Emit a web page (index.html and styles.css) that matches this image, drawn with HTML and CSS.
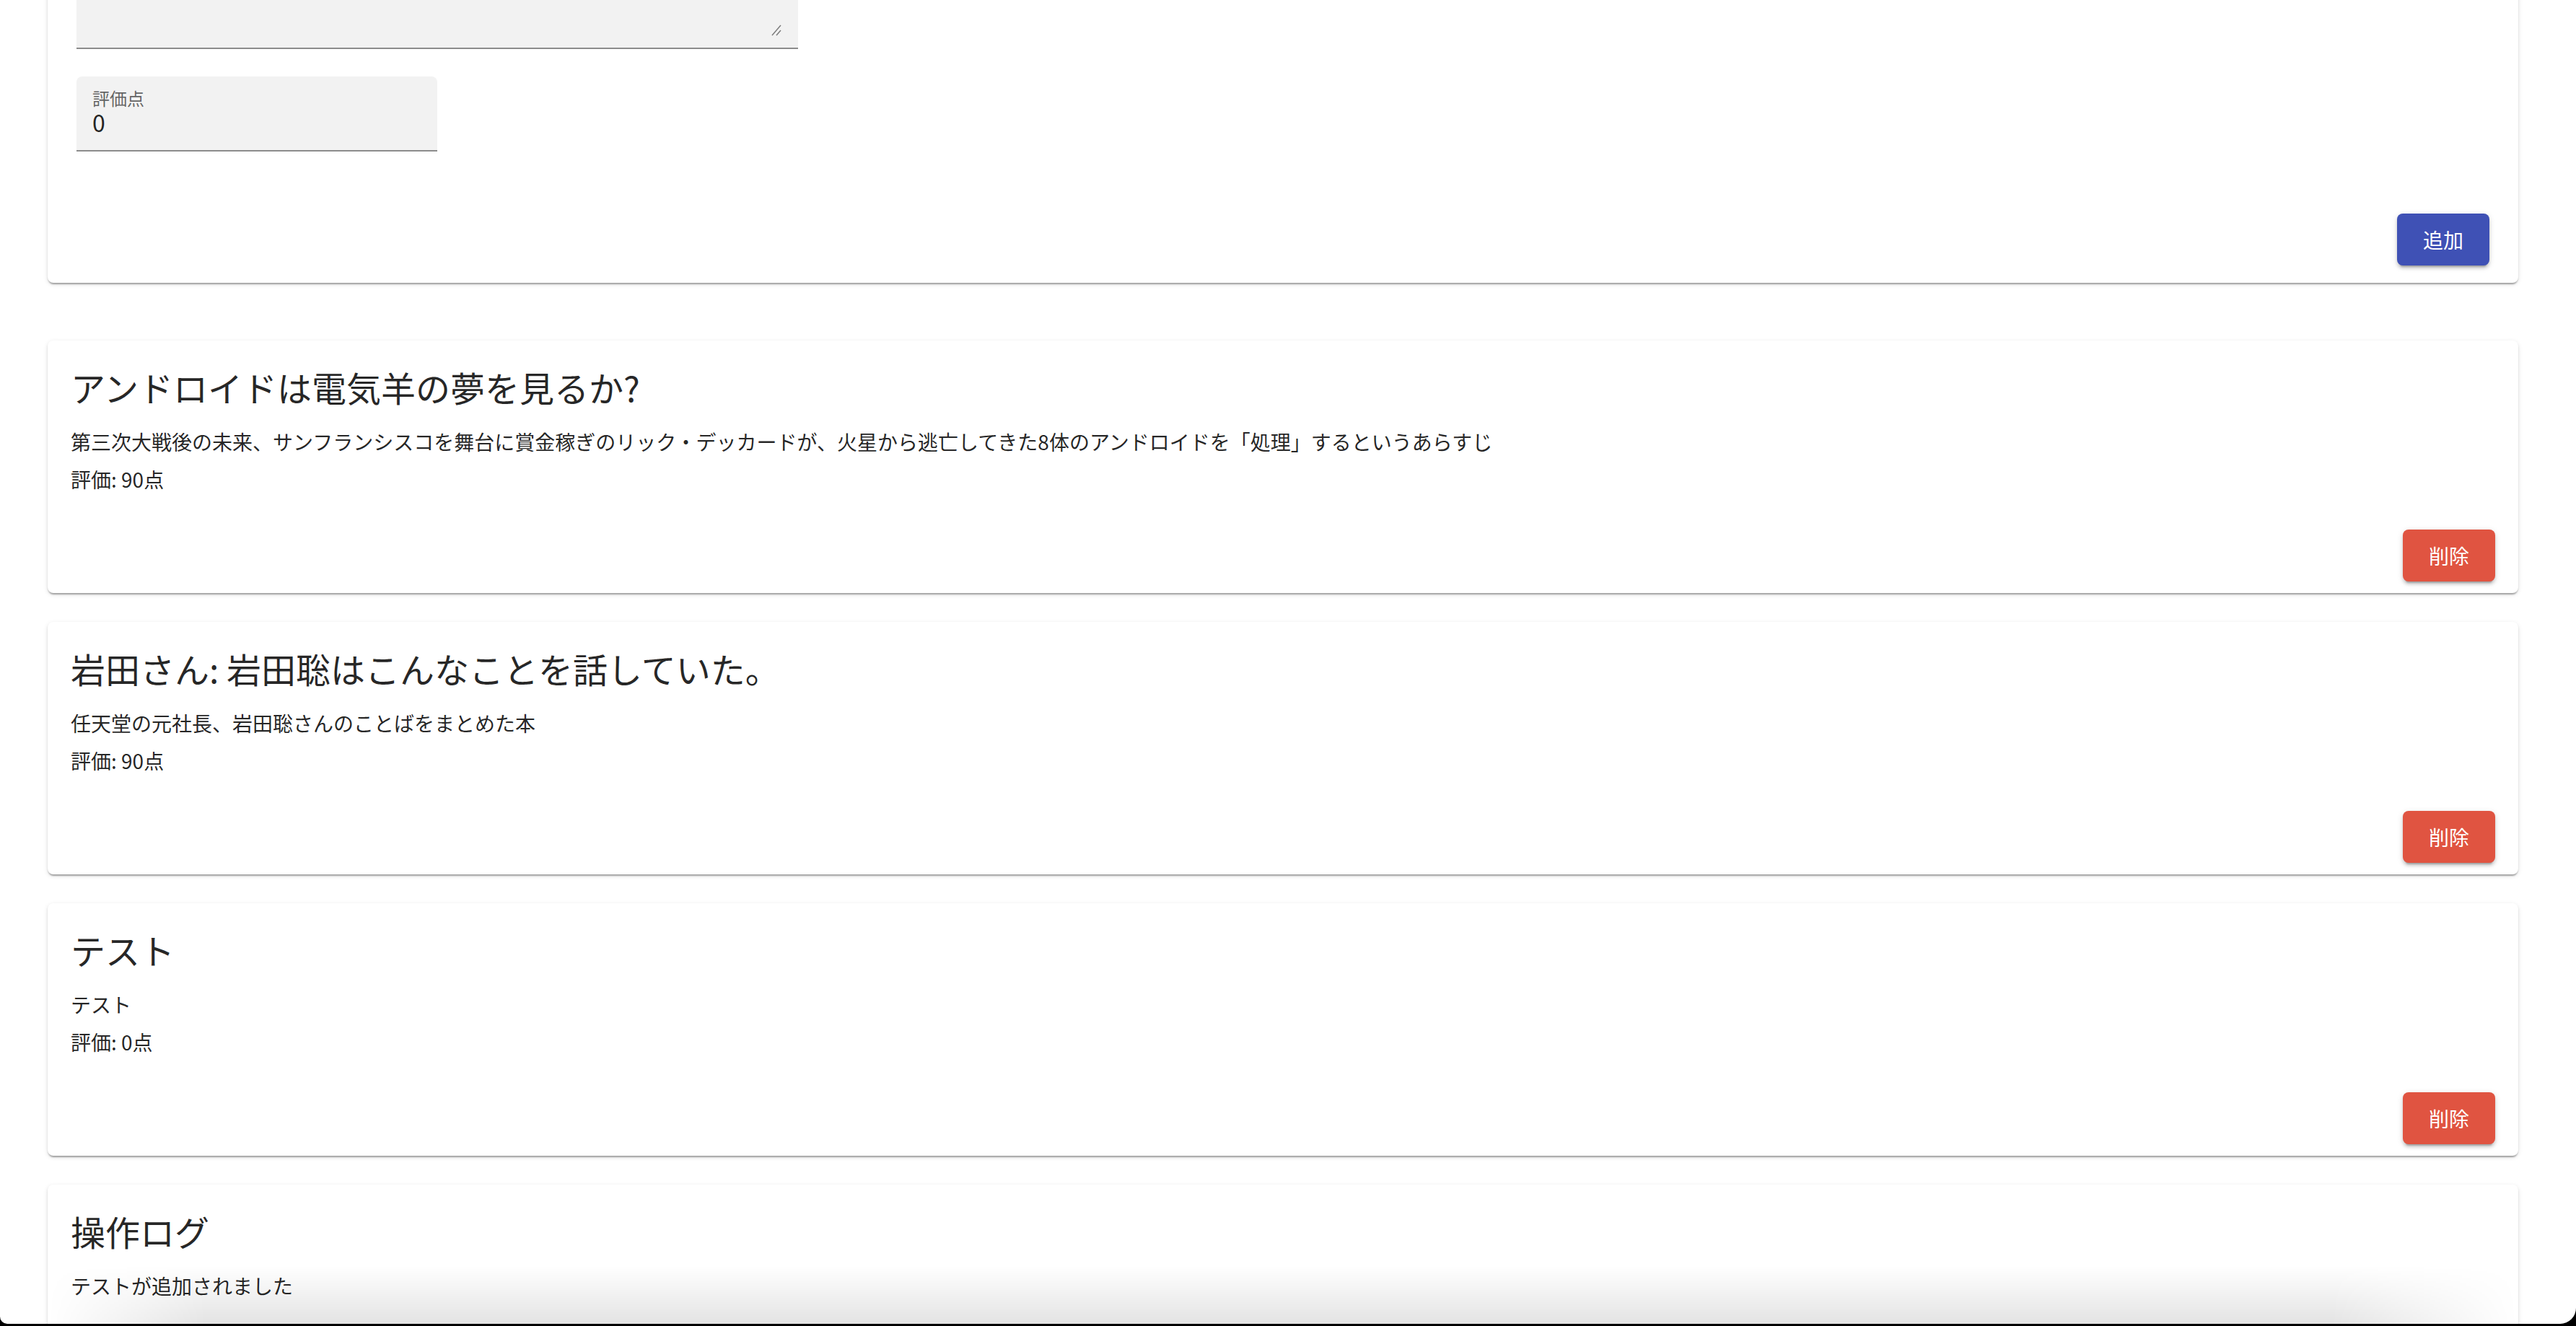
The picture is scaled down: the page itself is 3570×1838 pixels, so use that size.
FILE: index.html
```html
<!DOCTYPE html>
<html lang="ja">
<head>
<meta charset="utf-8">
<title>読書記録</title>
<link rel="stylesheet" href="styles.css">
</head>
<body>
<div class="window">
  <main class="page">
    <section class="card form-card">
      <div class="field field-multiline">
        <svg class="resize-handle" width="14" height="16" viewBox="0 0 14 16" aria-hidden="true">
          <line x1="1" y1="15" x2="13" y2="1" />
          <line x1="7" y1="15" x2="13" y2="8" />
        </svg>
      </div>
      <div class="field field-rating">
        <span class="field-label">評価点</span>
        <div class="field-value">0</div>
      </div>
      <div class="form-actions">
        <button class="btn btn-primary" type="button">追加</button>
      </div>
    </section>

    <section class="card book-card">
      <div class="card-content">
        <h2 class="card-title">アンドロイドは電気羊の夢を見るか?</h2>
        <p class="card-text card-desc">第三次大戦後の未来、サンフランシスコを舞台に賞金稼ぎのリック・デッカードが、火星から逃亡してきた8体のアンドロイドを「処理」するというあらすじ</p>
        <p class="card-text">評価: 90点</p>
      </div>
      <div class="card-actions">
        <button class="btn btn-danger" type="button">削除</button>
      </div>
    </section>

    <section class="card book-card">
      <div class="card-content">
        <h2 class="card-title">岩田さん: 岩田聡はこんなことを話していた。</h2>
        <p class="card-text card-desc">任天堂の元社長、岩田聡さんのことばをまとめた本</p>
        <p class="card-text">評価: 90点</p>
      </div>
      <div class="card-actions">
        <button class="btn btn-danger" type="button">削除</button>
      </div>
    </section>

    <section class="card book-card">
      <div class="card-content">
        <h2 class="card-title">テスト</h2>
        <p class="card-text card-desc">テスト</p>
        <p class="card-text">評価: 0点</p>
      </div>
      <div class="card-actions">
        <button class="btn btn-danger" type="button">削除</button>
      </div>
    </section>

    <section class="card log-card">
      <div class="card-content">
        <h2 class="card-title">操作ログ</h2>
        <p class="card-text">テストが追加されました</p>
      </div>
    </section>
  </main>
  <div class="bottom-shade"></div>
</div>
</body>
</html>
```

FILE: styles.css
```css
html {
  background: #000;
}

body {
  margin: 0;
  font-family: "Noto Sans CJK JP", "Noto Sans", sans-serif;
  color: rgba(0, 0, 0, 0.87);
}

.window {
  position: relative;
  height: 1835px;
  overflow: hidden;
  background: #fff;
  border-radius: 0 0 22px 10px;
}

.page {
  display: flex;
  flex-direction: column;
  gap: 40px;
  padding: 0 80px 0 66px;
  margin-top: -232px;
}

.card {
  background: #fff;
  border-radius: 8px;
  box-shadow: 0 4px 2px -2px rgba(0, 0, 0, 0.2),
              0 2px 2px 0 rgba(0, 0, 0, 0.14),
              0 2px 6px 0 rgba(0, 0, 0, 0.12);
}

/* ---------- form card ---------- */
.form-card {
  padding: 32px 40px 24px;
  margin-bottom: 40px;
}

.field {
  position: relative;
  box-sizing: border-box;
  background: #f2f2f2;
  border-bottom: 2px solid rgba(0, 0, 0, 0.42);
  border-radius: 8px 8px 0 0;
}

.field-multiline {
  width: 1000px;
  height: 268px;
}

.resize-handle {
  position: absolute;
  right: 23px;
  bottom: 16px;
}

.resize-handle line {
  stroke: #7a7a7a;
  stroke-width: 1.4;
}

.field-rating {
  width: 500px;
  height: 104px;
  margin-top: 38px;
  padding: 44px 24px 20px 22px;
}

.field-label {
  position: absolute;
  left: 22px;
  top: 18px;
  font-size: 24px;
  line-height: 24px;
  color: rgba(0, 0, 0, 0.6);
}

.field-value {
  font-size: 32px;
  line-height: 38px;
  color: rgba(0, 0, 0, 0.87);
}

.form-actions {
  display: flex;
  justify-content: flex-end;
  margin-top: 86px;
}

/* ---------- buttons ---------- */
.btn {
  width: 128px;
  height: 72px;
  border: none;
  border-radius: 8px;
  font-family: "Noto Sans CJK JP", "Noto Sans", sans-serif;
  font-size: 28px;
  font-weight: 400;
  line-height: 1;
  color: #fff;
  box-shadow: 0 6px 2px -4px rgba(0, 0, 0, 0.2),
              0 4px 4px 0 rgba(0, 0, 0, 0.14),
              0 2px 10px 0 rgba(0, 0, 0, 0.12);
  cursor: pointer;
}

.btn-primary {
  background: #3f51b5;
}

.btn-danger {
  background: #e05441;
}

/* ---------- book cards ---------- */
.card-content {
  padding: 32px 32px 0;
}

.card-title {
  margin: 0 0 24px;
  font-size: 48px;
  font-weight: 400;
  line-height: 64px;
}

.card-text {
  margin: 0;
  font-size: 28px;
  line-height: 40px;
}

.card-desc {
  margin-bottom: 12px;
}

.card-actions {
  display: flex;
  justify-content: flex-end;
  padding: 50px 32px 16px;
}

.log-card {
  height: 350px;
}

/* soft shade at the bottom of the window */
.bottom-shade {
  position: absolute;
  left: 66px;
  right: 80px;
  bottom: 0;
  height: 80px;
  background: linear-gradient(to top, rgba(0, 0, 0, 0.11), rgba(0, 0, 0, 0));
  -webkit-mask-image: linear-gradient(to right, transparent 0, #000 220px, #000 calc(100% - 260px), transparent 100%);
  mask-image: linear-gradient(to right, transparent 0, #000 220px, #000 calc(100% - 260px), transparent 100%);
  pointer-events: none;
}
```
